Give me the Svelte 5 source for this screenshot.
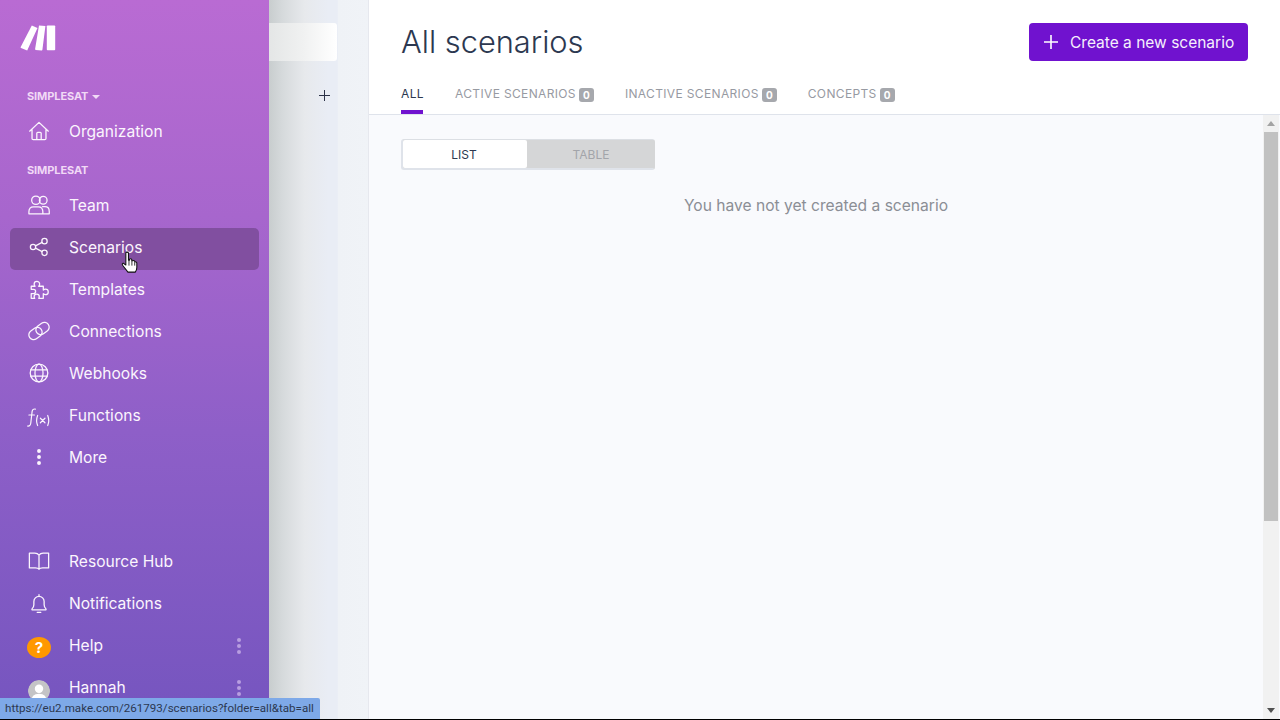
<script>
  const topItems = [
    { label: 'Team', icon: 'team' },
    { label: 'Scenarios', icon: 'share', active: true },
    { label: 'Templates', icon: 'puzzle' },
    { label: 'Connections', icon: 'link' },
    { label: 'Webhooks', icon: 'globe' },
    { label: 'Functions', icon: 'fx' },
    { label: 'More', icon: 'dots' }
  ];
  const tabs = [
    { label: 'All', active: true },
    { label: 'Active scenarios', count: 0 },
    { label: 'Inactive scenarios', count: 0 },
    { label: 'Concepts', count: 0 }
  ];
</script>

{#snippet icon(name)}
  <svg class="ico" viewBox="0 0 24 24" width="22" height="22" fill="none" stroke="currentColor" stroke-width="1.4" stroke-linecap="round" stroke-linejoin="round">
    {#if name === 'home'}
      <path d="M1.8 12.2 12 2.600l10.200 9.600M4.400 10v10.200q0 1.300 1.300 1.300h12.600q1.300 0 1.300-1.300V10M9.600 21.500v-7q0-1 1-1h2.800q1 0 1 1v7" />
    {:else if name === 'team'}
      <circle cx="8.600" cy="6.800" r="4.600" /><circle cx="16.600" cy="6.800" r="4.200" />
      <path d="M1 21.600v-2.200q0-5.400 5-5.400h5.200q5 0 5 5.400v2.200zM15.800 13.800h2.600q4.800 0 4.800 5.200v2.600h-6.600" />
    {:else if name === 'share'}
      <circle cx="5.500" cy="12" r="2.900" /><circle cx="18" cy="5.600" r="2.900" /><circle cx="18" cy="18.400" r="2.900" />
      <path d="M8.200 10.700 15.400 7M8.200 13.300l7.200 3.700" />
    {:else if name === 'puzzle'}
      <path d="M3.500 9h4.200q-1-1-1-2.400a3 3 0 0 1 6 0q0 1.400-1 2.400h5v4.200q1-1 2.400-1a3 3 0 0 1 0 6q-1.400 0-2.400-1v5h-5q.6-1 .6-1.800a2.800 2.800 0 0 0-5.600 0q0 .8.600 1.800H3.500v-5.200h2.500a2.300 2.300 0 0 0 0-4.600H3.500z" />
    {:else if name === 'link'}
      <g transform="rotate(-36 12 12)">
        <rect x="-.5" y="6.800" width="15.500" height="10.400" rx="5.200" />
        <rect x="9" y="6.800" width="15.500" height="10.400" rx="5.200" />
      </g>
    {:else if name === 'globe'}
      <circle cx="12" cy="12" r="9.600" /><ellipse cx="12" cy="12" rx="4.400" ry="9.600" />
      <path d="M3 8.600h18M3 15.400h18" />
    {:else if name === 'fx'}
      <path d="M8 5.500Q5 5 4.500 8L3 21Q2.500 24.500-.5 24M1 12h6" stroke-width="1.300" />
      <path d="M10.500 12.500q-2.200 5.500 0 11M21.500 12.500q2.200 5.500 0 11M13.500 15.500l5 5M18.500 15.500l-5 5" stroke-width="1.300" />
    {:else if name === 'dots'}
      <g fill="currentColor" stroke="none"><circle cx="12" cy="5.500" r="2.100" /><circle cx="12" cy="12" r="2.100" /><circle cx="12" cy="18.500" r="2.100" /></g>
    {:else if name === 'book'}
      <path d="M12 5.500Q10.500 3.500 7.500 3.500H1.500v16h6.500q3 0 4 1.500 1-1.500 4-1.500h6.500v-16h-6Q13.500 3.500 12 5.500zV21" />
    {:else if name === 'bell'}
      <path d="M4.400 18.400q2-1.800 2-4.400v-3.600a5.600 5.600 0 0 1 11.200 0V14q0 2.600 2 4.400q.4 1-.6 1H5q-1 0-.6-1zM10 22.200h4M12 4.800V3" />
    {/if}
  </svg>
{/snippet}

<div class="screen">
  <aside class="sidebar">
    <div class="logo">
      <svg viewBox="0 0 36 26" width="36" height="26" fill="#fff">
        <path d="M11.800.600l5.700 2.400L7.200 25.400 1 23q-.6-.4-.3-1.100z" />
        <path d="M19 .400l6.400.6-3 23.800q-.1.800-.8.700l-5.900-.6q-.7-.1-.6-.9z" />
        <rect x="26.800" y="0.500" width="8.400" height="24.800" rx=".8" />
      </svg>
    </div>
    <div class="org">SIMPLESAT <span class="caret"></span></div>
    <div class="item">{@render icon('home')}<span>Organization</span></div>
    <div class="org second">SIMPLESAT</div>
    {#each topItems as it}
      <div class="item" class:active={it.active}>{@render icon(it.icon)}<span>{it.label}</span></div>
    {/each}

    <div class="bottom">
      <div class="item">{@render icon('book')}<span>Resource Hub</span></div>
      <div class="item">{@render icon('bell')}<span>Notifications</span></div>
      <div class="item">
        <div class="help">?</div><span>Help</span>
        <div class="kebab"><i></i><i></i><i></i></div>
      </div>
      <div class="item">
        <div class="avatar">
          <svg viewBox="0 0 24 24" width="22" height="22"><circle cx="12" cy="12" r="12" fill="#c4c4c6" /><circle cx="12" cy="9.500" r="4.600" fill="#fff" /><path d="M3.500 24q0-9 8.500-9t8.500 9z" fill="#fff" /></svg>
        </div>
        <span>Hannah</span>
        <div class="kebab"><i></i><i></i><i></i></div>
      </div>
    </div>
  </aside>

  <div class="folders">
    <div class="search"></div>
    <div class="add">
      <svg viewBox="0 0 11 11" width="11" height="11" stroke="#2c3348" stroke-width="1"><path d="M5.500 0v11M0 5.500h11" /></svg>
    </div>
  </div>

  <main class="main">
    <header class="head">
      <div class="head-top">
        <h1>All scenarios</h1>
        <button class="create">
          <svg viewBox="0 0 14 14" width="14" height="14" stroke="#fff" stroke-width="1.600"><path d="M7 0v14M0 7h14" /></svg>
          <span>Create a new scenario</span>
        </button>
      </div>
      <nav class="tabs">
        {#each tabs as t}
          <div class="tab" class:on={t.active}>
            {t.label}{#if t.count !== undefined}<b class="count">{t.count}</b>{/if}
          </div>
        {/each}
      </nav>
    </header>
    <div class="body">
      <div class="content">
        <div class="seg">
          <div class="seg-on">LIST</div>
          <div class="seg-off">TABLE</div>
        </div>
        <p class="empty">You have not yet created a scenario</p>
      </div>
      <div class="scrollbar">
        <div class="arrow up"></div>
        <div class="thumb"></div>
        <div class="arrow down"></div>
      </div>
    </div>
  </main>

  <div class="status">https://eu2.make.com/261793/scenarios?folder=all&amp;tab=all</div>
  <svg class="cursor" viewBox="0 0 16 22" width="17" height="23">
    <path d="M4.500 1.500q1.500-1 2.500.3v7l1 .1V7.800q1.300-.9 2.200.3v1.200l.8.100q1.300-.7 2 .5l.6.500q1.200-.2 1.400 1.200v4.300q0 2.400-1.500 4.300H6.500L1.400 13.600q-.8-1.400.5-2l2.600 1.800z" fill="#fff" stroke="#111" stroke-width="1" stroke-linejoin="round" />
    <path d="M7.500 9v5M10.300 9.400V14M13 10v4" stroke="#111" stroke-width=".8" />
  </svg>
</div>

<style>
  :global(body) { margin: 0; background: #000; }
  .screen {
    position: relative;
    width: 1280px;
    height: 719px;
    display: flex;
    overflow: hidden;
    font-family: Inter, "Liberation Sans", sans-serif;
    background: #fff;
  }
  .sidebar {
    width: 269px;
    flex: none;
    display: flex;
    flex-direction: column;
    color: #fff;
    background: linear-gradient(180deg, #b96bd3 0%, #a766cd 30%, #8e5fc8 60%, #7555bf 100%);
  }
  .logo { height: 81px; box-sizing: border-box; padding: 25px 0 0 20px; }
  .logo svg { display: block; }
  .org {
    height: 30px;
    padding-left: 27px;
    display: flex;
    align-items: center;
    gap: 4px;
    font-size: 11px;
    font-weight: 700;
    letter-spacing: -.1px;
    color: #f1d9f6;
  }
  .org.second { height: 31px; }
  .org + .item { margin-top: 1px; }
  .caret {
    width: 0; height: 0;
    border-left: 4px solid transparent;
    border-right: 4px solid transparent;
    border-top: 4px solid #f1d9f6;
    margin-top: 1px;
  }
  .item {
    height: 42px;
    margin: 0 10px;
    border-radius: 5px;
    display: flex;
    align-items: center;
    position: relative;
    font-size: 15.6px;
    color: #fbf5fd;
  }
  .item span { position: relative; top: -2px; }
  .item.active { background: #814fa0; }
  .ico { margin-left: 18px; margin-right: 19px; flex: none; position: relative; top: -2px; overflow: visible; }
  .bottom { margin-top: auto; padding-bottom: 9px; }
  .help {
    margin-left: 17px;
    margin-right: 18px;
    width: 24px; height: 21px;
    border-radius: 50%;
    background: #ff9800;
    color: #fff;
    font-size: 15px;
    font-weight: 700;
    line-height: 21px;
    text-align: center;
    position: relative;
    flex: none;
  }
  .avatar { margin-left: 18px; margin-right: 19px; width: 22px; height: 22px; flex: none; position: relative; top: 2px; border-radius: 50%; overflow: hidden; }
  .avatar svg { display: block; width: 22px; height: 22px; }
  .kebab {
    position: absolute;
    right: 18px;
    top: 12px;
    display: flex;
    flex-direction: column;
    gap: 2px;
  }
  .kebab i { width: 4px; height: 4px; border-radius: 50%; background: #b89ee0; display: block; }

  .folders {
    width: 99px;
    flex: none;
    position: relative;
    background: linear-gradient(90deg, #c8cdce 0%, #d6dadc 14%, #e7e9ec 36%, #e9edf5 60%, #e9edf5 69%, #eff2f6 70%, #f0f3f7 100%);
    border-right: 1px solid #e6e8ee;
  }
  .search {
    margin-top: 23px;
    width: 68px;
    height: 38px;
    border-radius: 0 3px 3px 0;
    background: linear-gradient(90deg, #e4e6e6 0%, #f0f1f1 50%, #fff 100%);
  }
  .add { position: absolute; left: 50px; top: 90px; line-height: 0; }

  .main { flex: 1; min-width: 0; display: flex; flex-direction: column; }
  .head {
    height: 115px;
    box-sizing: border-box;
    border-bottom: 1px solid #dfe3eb;
    padding: 0 32px;
    background: #fff;
    display: flex;
    flex-direction: column;
  }
  .head-top {
    display: flex;
    justify-content: space-between;
    padding-top: 23px;
    height: 61px;
    box-sizing: border-box;
    flex: none;
  }
  h1 {
    margin: 0;
    font-size: 30.8px;
    font-weight: 300;
    line-height: 38px;
    color: #2c3850;
  }
  .create {
    width: 219px;
    height: 38px;
    border: 0;
    border-radius: 4px;
    background: #7012cf;
    color: #f6effc;
    font: 400 15.5px Inter, "Liberation Sans", sans-serif;
    display: flex;
    align-items: center;
    padding: 0 0 0 15px;
    gap: 12px;
  }
  .tabs {
    display: flex;
    gap: 31px;
    margin-top: 20px;
    height: 33px;
  }
  .tab {
    font-size: 12px;
    letter-spacing: .35px;
    text-transform: uppercase;
    color: #979aa2;
    display: flex;
    align-items: flex-start;
    line-height: 25px;
    height: 33px;
    box-sizing: border-box;
    position: relative;
  }
  .tab.on { color: #2c3850; width: 22px; margin-right: 1px; }
  .tab.on::after {
    content: "";
    position: absolute;
    left: 0; right: 0; bottom: 0;
    height: 4px;
    background: #7012cf;
  }
  .count {
    margin: 7px 0 0 3px;
    width: 15px;
    height: 14px;
    border-radius: 3px;
    background: #a6a8ad;
    color: #fff;
    font-size: 10px;
    font-weight: 700;
    line-height: 14px;
    text-align: center;
    letter-spacing: 0;
  }
  .body { flex: 1; min-height: 0; display: flex; background: #f9fafd; }
  .content { flex: 1; padding: 24px 32px 0; }
  .seg {
    width: 254px;
    height: 31px;
    box-sizing: border-box;
    display: flex;
    border-radius: 3px;
    background: #d5d6d7;
    border: 2px solid #dfe3ea;
    border-right-color: #d5d6d7;
    border-top: 1px solid #dcdfe4;
    font-size: 12px;
  }
  .seg-on {
    width: 124px;
    background: #fff;
    border-radius: 2px;
    color: #2c3850;
    text-align: center;
    line-height: 30px;
    padding-right: 2px;
    box-sizing: border-box;
  }
  .seg-off {
    flex: 1;
    color: #a3a5aa;
    text-align: center;
    line-height: 30px;
    padding-left: 2px;
  }
  .empty {
    margin: 25px 0 0;
    text-align: center;
    font-size: 15.6px;
    line-height: 22px;
    color: #8b8e95;
  }
  .scrollbar {
    width: 16px;
    margin-right: 1px;
    flex: none;
    background: #f1f1f1;
    display: flex;
    flex-direction: column;
    align-items: center;
    position: relative;
  }
  .arrow { width: 0; height: 0; border-left: 4px solid transparent; border-right: 4px solid transparent; }
  .arrow.up { border-bottom: 5px solid #a3a3a3; margin-top: 6px; }
  .arrow.down { border-top: 5px solid #505050; margin-top: auto; margin-bottom: 6px; }
  .thumb { width: 14px; height: 389px; background: #c1c1c1; margin-top: 6px; }
  .status {
    position: absolute;
    left: 0;
    bottom: 0;
    height: 21px;
    width: 320px;
    box-sizing: border-box;
    padding-left: 5px;
    background: #7ea9e8;
    border-top-right-radius: 2px;
    color: #2c3850;
    font: 11.6px/20px Roboto, "Open Sans", sans-serif;
    white-space: nowrap;
  }
  .cursor { position: absolute; left: 121px; top: 251px; }
</style>
